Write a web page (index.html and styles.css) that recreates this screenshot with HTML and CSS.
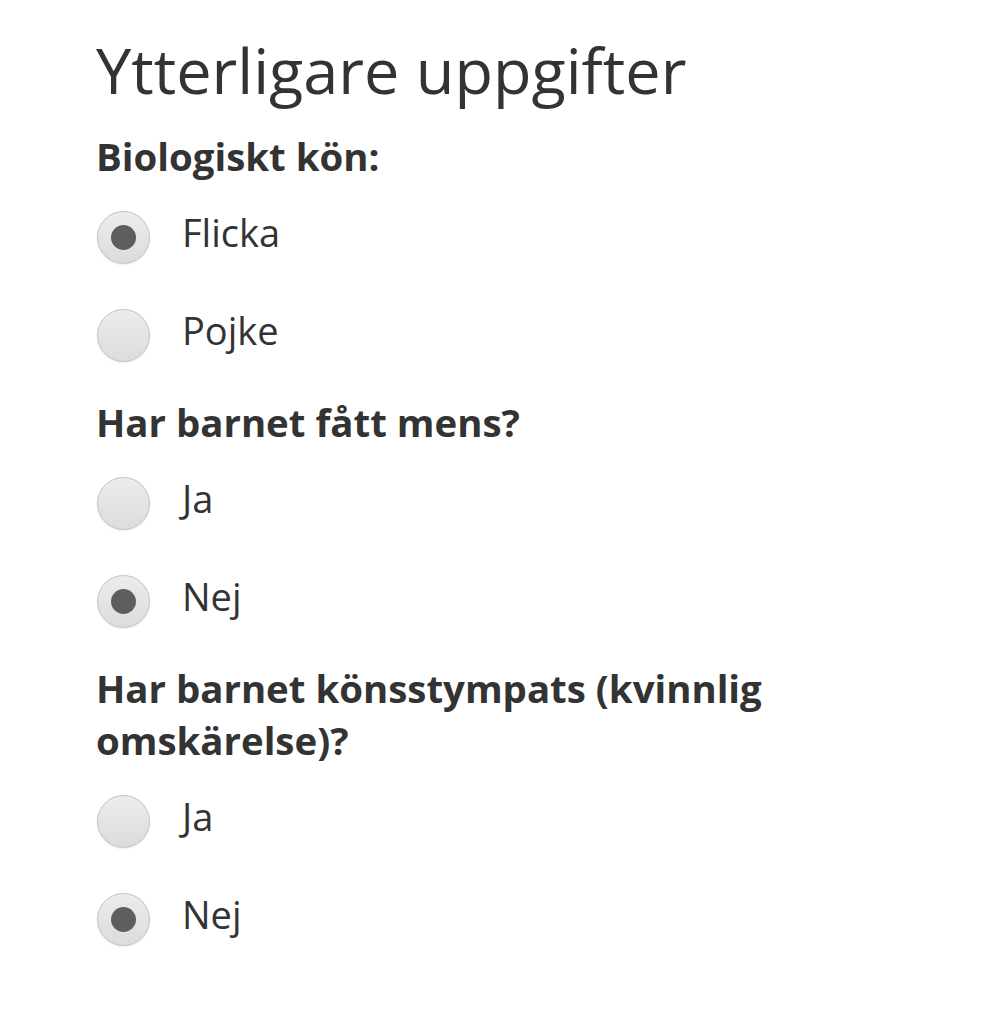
FILE: index.html
```html
<!DOCTYPE html>
<html lang="sv">
<head>
<meta charset="utf-8">
<title>Ytterligare uppgifter</title>
<link rel="stylesheet" href="styles.css">
</head>
<body>
<main class="page">
  <h1 class="title">Ytterligare uppgifter</h1>

  <section class="group">
    <p class="question">Biologiskt kön:</p>
    <div class="option"><span class="radio checked"></span><span class="label">Flicka</span></div>
    <div class="option"><span class="radio"></span><span class="label">Pojke</span></div>
  </section>

  <section class="group">
    <p class="question">Har barnet fått mens?</p>
    <div class="option"><span class="radio"></span><span class="label">Ja</span></div>
    <div class="option"><span class="radio checked"></span><span class="label">Nej</span></div>
  </section>

  <section class="group">
    <p class="question">Har barnet könsstympats (kvinnlig<br>omskärelse)?</p>
    <div class="option"><span class="radio"></span><span class="label">Ja</span></div>
    <div class="option"><span class="radio checked"></span><span class="label">Nej</span></div>
  </section>
</main>
</body>
</html>
```

FILE: styles.css
```css
html, body {
  margin: 0;
  padding: 0;
  background: #ffffff;
}

body {
  font-family: "Open Sans", "Noto Sans", sans-serif;
  color: #333333;
}

.page {
  display: flex;
  flex-direction: column;
  padding: 26px 0 0 96px;
}

.title {
  margin: 0 0 4px 0;
  font-size: 63px;
  line-height: 88px;
  font-weight: 400;
  color: #333333;
}

.group {
  display: flex;
  flex-direction: column;
  margin-top: 12px;
}

.question {
  margin: 0 0 6px 0;
  font-size: 38.4px;
  line-height: 52px;
  font-weight: 700;
  color: #333333;
}

.option {
  display: flex;
  align-items: center;
  height: 98px;
}

.radio {
  position: relative;
  flex: none;
  width: 53px;
  height: 53px;
  margin-left: 1px;
  box-sizing: border-box;
  border-radius: 50%;
  border: 1px solid #c2c2c2;
  background: linear-gradient(#ececec, #dcdcdc);
  box-shadow: 0 1px 2px rgba(0, 0, 0, 0.08);
}

.radio.checked::after {
  content: "";
  position: absolute;
  left: 50%;
  top: 50%;
  width: 25px;
  height: 25px;
  margin: -12.5px 0 0 -12.5px;
  border-radius: 50%;
  background: #5e5e5e;
}

.label {
  margin-left: 32px;
  padding-bottom: 10px;
  font-size: 38px;
  line-height: 52px;
  font-weight: 400;
  color: #333333;
}
```
